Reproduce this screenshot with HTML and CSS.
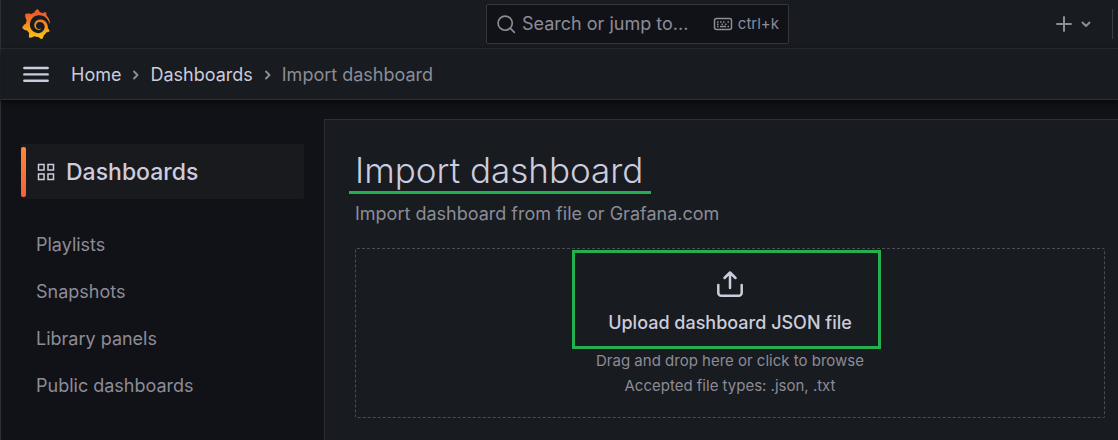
FILE: index.html
```
<!DOCTYPE html>
<html lang="en">
<head>
<meta charset="utf-8">
<title>Import dashboard - Dashboards - Grafana</title>
<link rel="stylesheet" href="styles.css">
</head>
<body>
<div class="app">
  <header class="topbar">
    <a class="logo" href="#" aria-label="Grafana">
      <svg viewBox="0 0 24 24" width="30" height="30" aria-hidden="true">
        <defs><linearGradient id="flame" x1="0" y1="1" x2="0" y2="0"><stop offset="0" stop-color="#fcc90f"/><stop offset="0.3" stop-color="#f9a31b"/><stop offset="0.85" stop-color="#f05a28"/></linearGradient></defs>
        <path fill="url(#flame)" d="M23.02 10.59a8.578 8.578 0 0 0-.862-3.034 8.911 8.911 0 0 0-1.789-2.445c.337-1.342-.413-2.505-.413-2.505-1.292-.08-2.113.4-2.416.62-.052-.02-.102-.044-.154-.064-.22-.089-.446-.172-.677-.247-.231-.073-.47-.14-.711-.197a9.867 9.867 0 0 0-.875-.161C14.557.753 12.94 0 12.94 0c-1.804 1.145-2.147 2.744-2.147 2.744l-.018.093c-.098.029-.2.057-.298.088-.138.042-.275.094-.413.143-.138.055-.275.107-.41.166a8.869 8.869 0 0 0-1.557.87l-.063-.029c-2.497-.955-4.716.195-4.716.195-.203 2.658.996 4.33 1.235 4.636a11.608 11.608 0 0 0-.607 2.635C1.636 12.677.953 15.014.953 15.014c1.926 2.214 4.171 2.351 4.171 2.351.003-.002.006-.002.006-.005.285.509.615.994.986 1.446.156.19.32.371.488.548-.704 2.009.099 3.68.099 3.68 2.144.08 3.553-.937 3.849-1.173a9.784 9.784 0 0 0 3.164.501h.08l.055-.003.107-.002.103-.005.003.002c1.01 1.44 2.788 1.646 2.788 1.646 1.264-1.332 1.337-2.653 1.337-2.94v-.058c0-.02-.003-.039-.003-.06.265-.187.52-.387.758-.6a7.875 7.875 0 0 0 1.415-1.7c1.43.083 2.437-.885 2.437-.885-.236-1.49-1.085-2.216-1.264-2.354l-.018-.013-.016-.013a.217.217 0 0 1-.031-.02c.008-.092.016-.18.02-.27.011-.162.016-.323.016-.48v-.253l-.005-.098-.008-.135a1.891 1.891 0 0 0-.01-.13c-.003-.042-.008-.083-.013-.125l-.016-.124-.018-.122a6.215 6.215 0 0 0-2.032-3.73 6.015 6.015 0 0 0-3.222-1.46 6.292 6.292 0 0 0-.85-.048l-.107.002h-.063l-.044.003-.104.008a4.777 4.777 0 0 0-3.335 1.695c-.332.4-.592.84-.768 1.297a4.594 4.594 0 0 0-.312 1.817l.003.091c.005.055.007.11.013.164a3.615 3.615 0 0 0 .698 1.82 3.53 3.53 0 0 0 1.827 1.282c.33.098.66.14.971.137.039 0 .078 0 .114-.002l.063-.003c.02 0 .041-.003.062-.003.034-.002.065-.007.099-.01.007 0 .018-.003.028-.003l.031-.005.06-.008a1.18 1.18 0 0 0 .112-.02c.036-.008.072-.013.109-.024a2.634 2.634 0 0 0 .914-.415c.028-.02.056-.041.085-.065a.248.248 0 0 0 .039-.35.244.244 0 0 0-.309-.06l-.078.042c-.09.044-.184.083-.283.116a2.476 2.476 0 0 1-.475.096c-.028.003-.054.006-.083.006l-.083.002c-.026 0-.054 0-.08-.002l-.102-.006h-.012l-.024.006c-.016-.003-.031-.003-.044-.006-.031-.002-.06-.007-.091-.01a2.59 2.59 0 0 1-.724-.213 2.557 2.557 0 0 1-.667-.438 2.52 2.52 0 0 1-.805-1.475 2.306 2.306 0 0 1-.029-.444l.006-.122v-.023l.002-.031c.003-.021.003-.04.005-.06a3.163 3.163 0 0 1 1.352-2.29 3.12 3.12 0 0 1 .937-.43 2.946 2.946 0 0 1 .776-.101h.06l.07.002.045.003h.026l.07.005a4.041 4.041 0 0 1 1.635.49 3.94 3.94 0 0 1 1.602 1.662 3.77 3.77 0 0 1 .397 1.414l.005.076.003.075c.002.026.002.05.002.075 0 .024.003.052 0 .07v.065l-.002.073-.008.174a6.195 6.195 0 0 1-.08.639 5.1 5.1 0 0 1-.267.927 5.31 5.31 0 0 1-.624 1.13 5.052 5.052 0 0 1-3.237 2.014 4.82 4.82 0 0 1-.649.066l-.039.003h-.287a6.607 6.607 0 0 1-1.716-.265 6.776 6.776 0 0 1-3.4-2.274 6.75 6.75 0 0 1-.746-1.15 6.616 6.616 0 0 1-.714-2.596l-.005-.083-.002-.02v-.056l-.003-.073v-.096l-.003-.104v-.07l.003-.163c.008-.22.026-.45.054-.678a8.707 8.707 0 0 1 .28-1.355c.128-.444.286-.872.473-1.277a7.04 7.04 0 0 1 1.456-2.1 5.925 5.925 0 0 1 .953-.763c.169-.111.343-.213.524-.306.089-.05.182-.091.273-.135.047-.02.093-.042.138-.062a7.177 7.177 0 0 1 .714-.267l.145-.045c.049-.015.098-.026.148-.041.098-.029.197-.052.296-.076.049-.013.1-.02.15-.033l.15-.032.151-.028.076-.013.075-.01.153-.024c.057-.01.114-.013.171-.023l.169-.021c.036-.003.073-.008.106-.01l.073-.008.036-.003.042-.002c.057-.003.114-.008.171-.01l.086-.006h.023l.037-.003.145-.007a7.999 7.999 0 0 1 1.708.125 7.917 7.917 0 0 1 2.048.68 8.253 8.253 0 0 1 1.672 1.09l.09.077.089.078c.06.052.114.107.171.159.057.052.112.106.166.16.052.055.107.107.159.164a8.671 8.671 0 0 1 1.41 1.978c.012.026.028.052.04.078l.04.078.075.156c.023.051.05.1.07.153l.065.15a8.848 8.848 0 0 1 .45 1.34.19.19 0 0 0 .201.142.186.186 0 0 0 .172-.184c.01-.246.002-.532-.024-.856z"/>
      </svg>
    </a>
    <label class="search">
      <svg class="icon" viewBox="0 0 24 24" width="20" height="20" aria-hidden="true"><circle cx="11" cy="11" r="8.5"/><path d="M17 17l5 5"/></svg>
      <input class="search-input" type="text" placeholder="Search or jump to..." aria-label="Search or jump to">
      <span class="shortcut">
        <svg class="icon" viewBox="0 0 20 14" width="20" height="14" aria-hidden="true"><rect x="1.5" y="1.5" width="17" height="11" rx="2"/><path d="M4 5h1.5M7 5h1.5M10 5h1.5M14.5 5H16M4 7.2h1.5M8.500 7.200H10M12 7.200h1.500M4 9.500h1.500M7 9.500h6M14.500 9.500H16"/></svg>
        ctrl+k
      </span>
    </label>
    <div class="actions">
      <button class="new" type="button" aria-label="New">
        <svg class="icon" viewBox="0 0 16 16" width="16" height="16" aria-hidden="true"><path d="M8 1v14M1 8h14"/></svg>
        <svg class="icon" viewBox="0 0 10 10" width="10" height="10" aria-hidden="true"><path d="M1.500 3.500L5 7l3.500-3.500"/></svg>
      </button>
    </div>
  </header>

  <div class="navbar">
    <button class="menu" type="button" aria-label="Toggle menu">
      <svg viewBox="0 0 26 18" width="26" height="18" aria-hidden="true"><path stroke-width="2.400" d="M1.300 2h23.400M1.300 8.400h23.400M1.300 14.800h23.400"/></svg>
    </button>
    <nav aria-label="Breadcrumbs">
      <ol class="crumbs">
        <li><a href="#">Home</a></li>
        <li><svg class="icon" viewBox="0 0 8 10" width="8" height="10" aria-hidden="true"><path d="M2 1.500L5.500 5L2 8.500"/></svg><a href="#">Dashboards</a></li>
        <li><svg class="icon" viewBox="0 0 8 10" width="8" height="10" aria-hidden="true"><path d="M2 1.500L5.500 5L2 8.500"/></svg><span aria-current="page">Import dashboard</span></li>
      </ol>
    </nav>
  </div>

  <div class="body">
    <nav class="sidebar" aria-label="Dashboards section">
      <a class="section" href="#">
        <svg viewBox="0 0 18 18" width="18" height="18" aria-hidden="true"><path d="M1.500 1.500h5.500v5.500h-5.500zM11 1.500h5.500v5.500h-5.500zM1.500 11h5.500v5.500h-5.500zM11 11h5.500v5.500h-5.500z"/></svg>
        Dashboards
      </a>
      <ul class="links">
        <li><a href="#">Playlists</a></li>
        <li><a href="#">Snapshots</a></li>
        <li><a href="#">Library panels</a></li>
        <li><a href="#">Public dashboards</a></li>
      </ul>
    </nav>
    <main class="panel">
      <h1 class="title">Import dashboard</h1>
      <p class="subtitle">Import dashboard from file or Grafana.com</p>
      <button class="dropzone" type="button">
        <span class="upload">
          <svg viewBox="0 0 28 28" width="28" height="28" aria-hidden="true"><path stroke-width="2.500" d="M2.300 15v7.800a3 3 0 0 0 3 3h17.400a3 3 0 0 0 3-3V15M14 18V3M8.500 8L14 2.500L19.500 8"/></svg>
          Upload dashboard JSON file
        </span>
        <span class="hint">Drag and drop here or click to browse</span>
        <span class="hint">Accepted file types: .json, .txt</span>
      </button>
    </main>
  </div>
</div>
</body>
</html>
```
FILE: styles.css
```
:root {
  --canvas: #111217;
  --primary: #181b1f;
  --line: #2d2f34;
  --text: #ccccdc;
  --muted: #8c8c98;
  --mark: #22b14c;
}

* {
  box-sizing: border-box;
}

body {
  margin: 0;
  background: var(--canvas);
  color: var(--text);
  font-family: Inter, "Liberation Sans", sans-serif;
  font-size: 18px;
  line-height: 26px;
}

a {
  color: inherit;
  text-decoration: none;
}

button {
  padding: 0;
  border: 0;
  background: none;
  color: inherit;
  font: inherit;
  cursor: pointer;
}

svg {
  display: block;
  flex: none;
  fill: none;
  stroke: var(--text);
  stroke-width: 2;
  stroke-linecap: round;
  stroke-linejoin: round;
}

.icon {
  stroke: var(--muted);
}

.app {
  display: flex;
  flex-direction: column;
  min-height: 100vh;
  border-left: 1px solid var(--line);
}

.topbar {
  display: grid;
  grid-template-columns: minmax(0, 485fr) minmax(0, 303fr) minmax(0, 329fr);
  align-items: center;
  height: 49px;
  background: var(--primary);
  border-bottom: 1px solid var(--line);
}

.logo {
  justify-self: start;
  padding-left: 20px;
}

.logo svg {
  stroke: none;
}

.search {
  display: flex;
  align-items: center;
  gap: 6px;
  height: 40px;
  padding: 0 9px;
  background: var(--canvas);
  border: 1px solid #35373d;
  border-radius: 2px;
}

.search-input {
  flex: 1;
  min-width: 0;
  padding: 0;
  border: 0;
  outline: 0;
  background: none;
  color: var(--text);
  font: inherit;
}

.search-input::placeholder {
  color: var(--muted);
  opacity: 1;
}

.shortcut {
  display: flex;
  align-items: center;
  gap: 5px;
  color: var(--muted);
  font-size: 15px;
}

.shortcut svg {
  stroke-width: 1.5;
  stroke-linecap: butt;
}

.actions {
  display: flex;
  justify-content: flex-end;
  padding-right: 5px;
}

.new {
  display: flex;
  align-items: center;
  gap: 9px;
  height: 30px;
  padding-right: 21px;
  border-right: 1px solid #3a3c42;
}

.navbar {
  display: flex;
  align-items: center;
  gap: 22px;
  height: 51px;
  padding: 1px 0 0 22px;
  background: var(--primary);
  border-bottom: 1px solid var(--line);
  box-shadow: 0 2px 5px #060709;
}

.crumbs {
  display: flex;
  margin: 0;
  padding: 0;
  list-style: none;
}

.crumbs li {
  display: flex;
  align-items: center;
}

.crumbs .icon {
  margin: 0 10px 0 11px;
}

.crumbs [aria-current] {
  color: var(--muted);
}

.body {
  display: flex;
  flex: 1;
}

.sidebar {
  flex: none;
  width: 323px;
  padding: 44px 20px 0;
}

.section {
  position: relative;
  display: flex;
  align-items: center;
  gap: 11px;
  height: 55px;
  padding-left: 16px;
  background: #181a1d;
  border-radius: 2px;
  font-size: 23px;
  font-weight: 500;
}

.section::before {
  content: "";
  position: absolute;
  inset: 3px auto 2px 0;
  width: 5px;
  border-radius: 2px;
  background: linear-gradient(#ff8833, #f55f3e);
}

.section svg {
  stroke-width: 1.5;
  stroke-linejoin: miter;
}

.links {
  display: flex;
  flex-direction: column;
  gap: 21px;
  margin: 33px 0 0;
  padding: 0 0 0 15px;
  list-style: none;
  color: var(--muted);
}

.panel {
  flex: 1;
  margin-top: 19px;
  padding: 28px 13px 21px 30px;
  background: var(--primary);
  border: solid var(--line);
  border-width: 1px 0 0 1px;
}

.title {
  position: relative;
  width: fit-content;
  margin: 0;
  font-size: 35px;
  font-weight: 350;
  line-height: 44px;
}

.title::after {
  content: "";
  position: absolute;
  inset: auto -8px -2px -6px;
  height: 3px;
  background: var(--mark);
}

.subtitle {
  margin: 9px 0 21px;
  color: var(--muted);
}

.dropzone {
  display: flex;
  flex-direction: column;
  align-items: center;
  width: 100%;
  padding: 21px 0 19px;
  border: 1px dashed #4b4d54;
  border-radius: 2px;
}

.upload {
  position: relative;
  display: flex;
  flex-direction: column;
  align-items: center;
  gap: 12px;
  margin-bottom: 12px;
  font-weight: 500;
}

.upload::after {
  content: "";
  position: absolute;
  inset: -20px -29px -13px -36px;
  border: 3px solid var(--mark);
}

.hint {
  color: var(--muted);
  font-size: 15px;
  line-height: 25px;
}
```
